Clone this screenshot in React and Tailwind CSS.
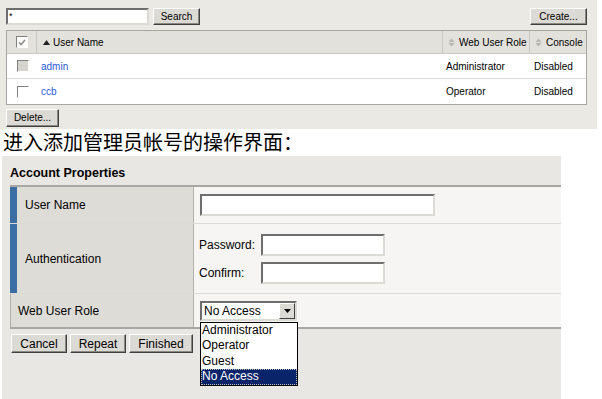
import React from "react";

const font = { fontFamily: '"Liberation Sans", Arial, sans-serif' };

function Btn({ children, className = "" }) {
  return (
    <button
      className={`px-[4px] leading-none text-black bg-[#dcdad5] border border-t-white border-l-white border-r-[#404040] border-b-[#404040] shadow-[inset_-1px_-1px_0_#8a8883] whitespace-nowrap ${className}`}
    >
      {children}
    </button>
  );
}

function Field({ className = "" }) {
  return (
    <div
      className={`bg-white border-2 border-t-[#6e6e6e] border-l-[#6e6e6e] border-r-[#dcdad5] border-b-[#dcdad5] ${className}`}
    />
  );
}

function SortBoth() {
  return (
    <svg width="7" height="9" viewBox="0 0 7 9" className="mr-[4px] shrink-0">
      <path d="M3.5 0.5 L6.5 4 H0.5 Z" fill="#b9b7b2" />
      <path d="M3.5 8.5 L6.5 5 H0.5 Z" fill="#b9b7b2" />
    </svg>
  );
}

function Check({ checked, disabled }) {
  return (
    <div
      className={`w-[12px] h-[12px] border border-t-[#808080] border-l-[#808080] border-r-white border-b-white flex items-center justify-center ${
        disabled ? "bg-[#d6d4cf]" : "bg-white"
      }`}
    >
      {checked && (
        <svg width="8" height="7" viewBox="0 0 8 7">
          <path d="M1 3.5 L3 5.5 L7 1" stroke="#8c8a86" strokeWidth="1.6" fill="none" />
        </svg>
      )}
    </div>
  );
}

const users = [
  { name: "admin", role: "Administrator", console: "Disabled", disabled: true },
  { name: "ccb", role: "Operator", console: "Disabled", disabled: false },
];

export default function App() {
  return (
    <div className="w-[602px] h-[399px] bg-white overflow-hidden text-black" style={font}>
      {/* user list */}
      <div className="w-[597px] h-[129px] bg-[#ebe9e4] pt-[8px] pl-[6px] pr-[10px] text-[10px] whitespace-nowrap">
        <div className="flex items-center h-[17px]">
          <div className="w-[143px] h-[17px] bg-white border-2 border-t-[#6e6e6e] border-l-[#6e6e6e] border-r-[#dcdad5] border-b-[#dcdad5] text-[9px] leading-[13px] pl-[1px]">
            *
          </div>
          <Btn className="ml-[4px] w-[47px] h-[17px] text-[10px]">Search</Btn>
          <Btn className="ml-auto w-[57px] h-[17px] text-[10px]">Create...</Btn>
        </div>

        <div className="mt-[5px] border border-[#a8a6a1] bg-white">
          <div className="flex h-[23px] bg-[#e3e1dc] border-b border-[#c9c7c2]">
            <div className="w-[30px] flex items-center justify-center border-r border-[#c9c7c2]">
              <Check checked />
            </div>
            <div className="flex-1 flex items-center pl-[6px] border-r border-[#c9c7c2]">
              <svg width="7" height="5" viewBox="0 0 7 5" className="mr-[3px]">
                <path d="M3.5 0 L7 5 H0 Z" fill="#222" />
              </svg>
              User Name
            </div>
            <div className="w-[87px] flex items-center pl-[5px] border-r border-[#c9c7c2]">
              <SortBoth />
              Web User Role
            </div>
            <div className="w-[56px] flex items-center pl-[5px]">
              <SortBoth />
              Console
            </div>
          </div>
          {users.map((u, i) => (
            <div
              key={u.name}
              className={`flex h-[25px] items-center ${i === 0 ? "border-b border-[#dddbd7]" : ""}`}
            >
              <div className="w-[31px] flex justify-center pl-[1px]">
                <Check disabled={u.disabled} />
              </div>
              <div className="flex-1 pl-[3px] text-[#2a5ad8]">{u.name}</div>
              <div className="w-[87px] pl-[3px]">{u.role}</div>
              <div className="w-[56px] pl-[4px]">{u.console}</div>
            </div>
          ))}
        </div>

        <Btn className="mt-[4px] w-[53px] h-[18px] text-[10px]">Delete...</Btn>
      </div>

      {/* caption */}
      <div
        className="h-[27px] pl-[3px] text-[20px] leading-[25px] text-black whitespace-nowrap"
        style={{ fontFamily: '"Noto Sans CJK SC", "Noto Sans", sans-serif' }}
      >
        进入添加管理员帐号的操作界面：
      </div>

      {/* account properties */}
      <div className="ml-[2px] w-[559px] h-[243px] bg-[#e9e7e3] pl-[8px] pt-[10px] text-[12px] whitespace-nowrap">
        <div className="font-bold text-[12.5px] leading-[14px] h-[19px]">Account Properties</div>
        <div className="border-t-2 border-b-2 border-[#a9a7a3]">
          <div className="flex h-[37px] border-b border-[#dcdad6]">
            <div className="w-[7px] bg-[#3c6ea3]" />
            <div className="w-[177px] bg-[#dedcd7] border-r border-[#b3b1ac] flex items-center pl-[8px]">
              User Name
            </div>
            <div className="flex-1 bg-[#f6f5f3] flex items-center pl-[6px]">
              <Field className="w-[235px] h-[22px]" />
            </div>
          </div>
          <div className="flex h-[70px] border-b border-[#dcdad6]">
            <div className="w-[7px] bg-[#3c6ea3]" />
            <div className="w-[177px] bg-[#dedcd7] border-r border-[#b3b1ac] flex items-center pl-[8px]">
              Authentication
            </div>
            <div className="flex-1 bg-[#f6f5f3] flex flex-col justify-center gap-[6px] pl-[5px]">
              <div className="flex items-center">
                <span className="w-[62px]">Password:</span>
                <Field className="w-[124px] h-[22px]" />
              </div>
              <div className="flex items-center">
                <span className="w-[62px]">Confirm:</span>
                <Field className="w-[124px] h-[22px]" />
              </div>
            </div>
          </div>
          <div className="flex h-[33px]">
            <div className="w-[184px] bg-[#dedcd7] border-r border-l border-[#b3b1ac] flex items-center pl-[7px]">
              Web User Role
            </div>
            <div className="flex-1 bg-[#f6f5f3] flex items-center pl-[6px]">
              <div className="relative">
                <div className="w-[97px] h-[20px] bg-white border-2 border-t-[#6e6e6e] border-l-[#6e6e6e] border-r-[#dcdad5] border-b-[#dcdad5] flex items-center pl-[2px]">
                  <span className="flex-1">No Access</span>
                  <div className="w-[16px] h-[16px] bg-[#dcdad5] border border-t-white border-l-white border-r-[#404040] border-b-[#404040] flex items-center justify-center">
                    <svg width="7" height="4" viewBox="0 0 7 4">
                      <path d="M0 0 H7 L3.5 4 Z" fill="#000" />
                    </svg>
                  </div>
                </div>
                <div className="absolute left-0 top-[21px] w-[98px] bg-white border border-black leading-[15.5px] z-10">
                  <div className="pl-[1px]">Administrator</div>
                  <div className="pl-[1px]">Operator</div>
                  <div className="pl-[1px]">Guest</div>
                  <div className="pl-[1px] bg-[#0a246a] text-white outline-1 outline-dotted outline-[#c0c0c0] -outline-offset-1">
                    No Access
                  </div>
                </div>
              </div>
            </div>
          </div>
        </div>
        <div className="flex gap-[3px] mt-[5px] pl-[1px]">
          <Btn className="w-[56px] h-[19px] text-[12px]">Cancel</Btn>
          <Btn className="w-[56px] h-[19px] text-[12px]">Repeat</Btn>
          <Btn className="w-[64px] h-[19px] text-[12px]">Finished</Btn>
        </div>
      </div>
    </div>
  );
}
